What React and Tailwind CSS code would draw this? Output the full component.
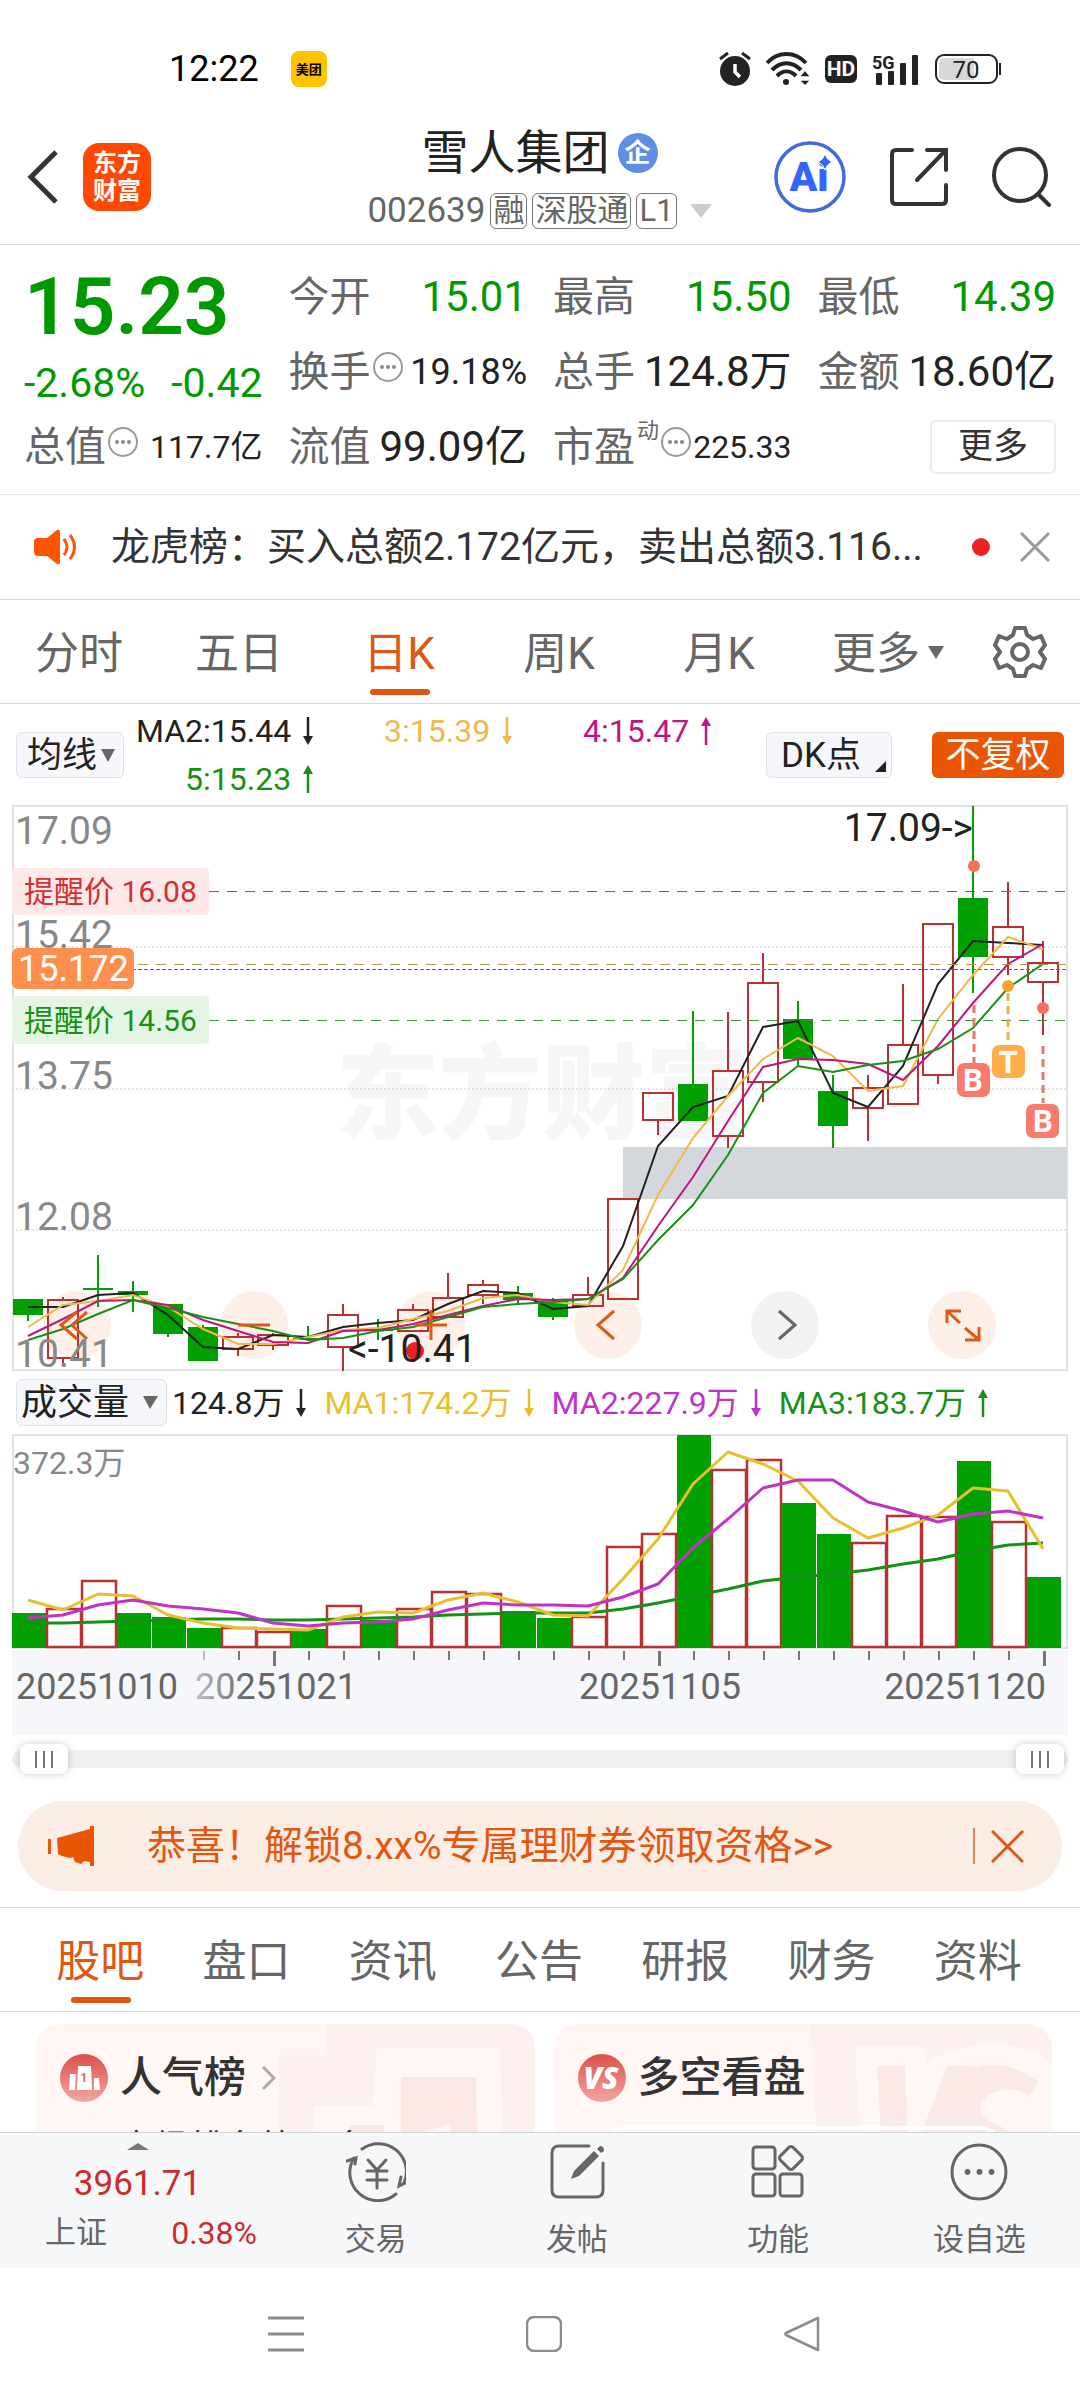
import { useState } from "react";
import clsx from "clsx";

const STEP = 35;
const cx = (i) => 16 + i * STEP;

// [type, wickTop, bodyTop, bodyBottom, wickBottom]
const candles = [
  ["down", 494, 494, 510, 516],
  ["up", 492, 495, 553, 560],
  ["down", 450, 483, 485, 502],
  ["down", 476, 486, 490, 507],
  ["down", 499, 499, 529, 532],
  ["down", 520, 522, 556, 556],
  ["up", 528, 532, 544, 551],
  ["up", 528, 530, 540, 545],
  ["down", 521, 533, 535, 536],
  ["up", 499, 510, 542, 566],
  ["down", 514, 524, 526, 535],
  ["up", 499, 505, 526, 526],
  ["up", 468, 493, 512, 512],
  ["up", 475, 480, 490, 499],
  ["down", 481, 488, 495, 500],
  ["down", 493, 496, 512, 515],
  ["up", 472, 490, 501, 501],
  ["up", 394, 394, 494, 494],
  ["up", 288, 288, 315, 330],
  ["down", 206, 279, 316, 316],
  ["up", 207, 266, 331, 343],
  ["up", 148, 178, 277, 297],
  ["down", 196, 214, 254, 260],
  ["down", 270, 286, 321, 343],
  ["up", 270, 283, 303, 336],
  ["up", 179, 240, 299, 299],
  ["up", 119, 119, 270, 279],
  ["down", 1, 93, 152, 188],
  ["up", 77, 122, 152, 170],
  ["up", 136, 158, 177, 230],
];

const priceLines = [
  { color: "#222222", ys: [502, 502, 490, 488, 510, 542, 544, 530, 532, 522, 518, 515, 499, 486, 488, 504, 501, 441, 341, 302, 291, 222, 216, 288, 302, 261, 179, 136, 138, 140] },
  { color: "#f2b84b", ys: [522, 500, 496, 490, 502, 524, 539, 539, 532, 525, 523, 514, 506, 493, 490, 497, 500, 465, 390, 333, 291, 254, 233, 251, 286, 281, 214, 170, 132, 144] },
  { color: "#c0157f", ys: [531, 514, 496, 495, 500, 515, 526, 537, 538, 526, 525, 519, 510, 501, 494, 495, 494, 473, 421, 372, 316, 262, 254, 255, 259, 275, 241, 198, 159, 139] },
  { color: "#159215", ys: [535, 524, 509, 495, 503, 512, 519, 526, 535, 533, 526, 522, 512, 502, 499, 497, 494, 474, 435, 400, 350, 288, 261, 267, 260, 256, 244, 223, 183, 159] },
];

const volumeTops = [179, 174, 146, 179, 183, 194, 193, 197, 195, 171, 186, 174, 157, 159, 177, 184, 182, 112, 99, 1, 35, 25, 69, 100, 108, 81, 82, 27, 87, 143];
const volumeDown = [0, 3, 4, 5, 8, 10, 14, 15, 19, 22, 23, 27, 29];

const volumeLines = [
  { color: "#159215", ys: [189, 189, 188, 187, 186, 185, 185, 186, 186, 185, 184, 183, 181, 180, 179, 179, 179, 175, 169, 162, 155, 147, 143, 140, 136, 130, 125, 117, 111, 109] },
  { color: "#e8bf2c", ys: [166, 176, 160, 162, 181, 189, 194, 195, 196, 183, 178, 179, 166, 159, 168, 181, 182, 145, 105, 50, 18, 30, 47, 84, 104, 94, 81, 54, 57, 115] },
  { color: "#bf33c6", ys: [184, 181, 171, 166, 172, 175, 179, 189, 192, 189, 188, 185, 176, 169, 171, 171, 172, 163, 150, 114, 85, 54, 46, 46, 68, 77, 88, 80, 77, 84] },
];

const toPoints = (ys) => ys.map((y, i) => `${cx(i)},${y}`).join(" ");

const periods = ["分时", "五日", "日K", "周K", "月K"];
const sections = ["股吧", "盘口", "资讯", "公告", "研报", "财务", "资料"];

export default function App() {
  return (
    <div className="flex h-screen min-h-[2380px] flex-col bg-white font-['Roboto','Noto_Sans_CJK_SC',sans-serif] text-[#333]">
      <StatusBar />
      <Header />
      <Quote />
      <Notice />
      <PeriodTabs />
      <AverageBar />
      <main className="px-3">
        <PriceChart />
        <VolumeHeader />
        <VolumeChart />
        <RangeSlider />
      </main>
      <Promo />
      <SectionTabs />
      <Cards />
      <BottomBar />
      <SystemNav />
    </div>
  );
}

function StatusBar() {
  return (
    <div className="flex items-center justify-between pt-12 pr-[78px] pl-[169px] text-black">
      <div className="flex items-center gap-8">
        <span className="text-4xl leading-[42px]">12:22</span>
        <span className="flex size-9 items-center justify-center rounded-lg bg-[#ffc300] text-[13px] leading-none font-bold">美团</span>
      </div>
      <div className="flex items-center gap-[15px] text-[#222]">
        <svg width="32" height="34" viewBox="0 0 32 34">
          <circle cx="16" cy="19" r="15" fill="#222" />
          <path d="M16 12v8l5 5" stroke="#fff" strokeWidth="3.5" fill="none" />
          <path d="M1 7l8-6M31 7l-8-6" stroke="#222" strokeWidth="3" />
        </svg>
        <svg width="44" height="34" viewBox="0 0 44 34" fill="none" stroke="#222" strokeWidth="4">
          <path d="M1 11c11-12 28-12 39 0" />
          <path d="M6 18c9-9 20-9 29 0" />
          <path d="M11 24c6-6 13-6 19 0" />
          <circle cx="20" cy="30" r="3" fill="#222" stroke="none" />
          <path d="M39 18l6 7H33zM39 34l-6-6h12z" fill="#222" stroke="#fff" strokeWidth="1.5" />
        </svg>
        <span className="flex h-7 w-8 items-center justify-center rounded-md bg-[#222] text-[21px] leading-none font-bold text-white">HD</span>
        <svg width="48" height="34" viewBox="0 0 48 34" fill="#222">
          <text x="0" y="17" fontSize="18" fontWeight="700">5G</text>
          <rect x="4" y="21" width="6" height="12" rx="1" />
          <rect x="16" y="19" width="6" height="14" rx="1" />
          <rect x="28" y="11" width="6" height="22" rx="1" />
          <rect x="40" y="3" width="6" height="30" rx="1" />
        </svg>
        <svg width="67" height="30" viewBox="0 0 67 30">
          <rect x="1" y="1" width="61" height="28" rx="8" fill="#fff" stroke="#222" strokeWidth="2" />
          <path d="M10 4h29v22H10q-6 0-6-6V10q0-6 6-6z" fill="#d8d8d8" />
          <rect x="64" y="9" width="2" height="12" fill="#222" />
          <text x="31" y="24" fontSize="24" textAnchor="middle" fill="#222">70</text>
        </svg>
      </div>
    </div>
  );
}

function Header() {
  return (
    <header className="grid grid-cols-[1fr_auto_1fr] items-center border-b border-[#d9d9d9] pt-[34px] pr-7 pb-[15px] pl-[27px]">
      <div className="flex items-center gap-6">
        <button aria-label="返回">
          <svg width="32" height="54" viewBox="0 0 32 54" fill="none" stroke="#333" strokeWidth="5">
            <path d="M29 2L4 27l25 25" />
          </svg>
        </button>
        <a href="#home" className="flex size-[68px] flex-col items-center justify-center rounded-2xl bg-[#ff4800] text-2xl leading-7 font-bold text-white">
          <span>东方</span>
          <span>财富</span>
        </a>
      </div>
      <div className="flex flex-col items-center gap-[11px]">
        <div className="flex items-center gap-2">
          <h1 className="text-[47px] leading-[58px] text-[#222]">雪人集团</h1>
          <span className="flex size-10 items-center justify-center rounded-full bg-[#5f8ee6] text-[26px] leading-none font-bold text-white">企</span>
        </div>
        <div className="flex items-center gap-[5px] text-[35px] leading-[36px] text-[#666]">
          <span>002639</span>
          <Pill>融</Pill>
          <Pill>深股通</Pill>
          <Pill>L1</Pill>
          <svg className="ml-2" width="22" height="14" viewBox="0 0 22 14" fill="#ccc">
            <path d="M0 0h22L11 14z" />
          </svg>
        </div>
      </div>
      <div className="flex items-center justify-end gap-11">
        <button aria-label="Ai">
          <svg width="72" height="72" viewBox="0 0 72 72">
            <circle cx="36" cy="36" r="34" fill="none" stroke="#4169e1" strokeWidth="3.5" />
            <text x="35" y="50" fontSize="41" fontWeight="900" textAnchor="middle" fill="#3366ff">Ai</text>
            <path d="M51 13q2 6 7 8q-5 2-7 8q-2-6-7-8q5-2 7-8z" fill="#3366ff" stroke="#fff" strokeWidth="1" />
          </svg>
        </button>
        <button aria-label="分享">
          <svg width="58" height="58" viewBox="0 0 58 58" fill="none" stroke="#333" strokeWidth="4" strokeLinecap="round">
            <path d="M22 2H6Q2 2 2 6v46q0 4 4 4h46q4 0 4-4V37" />
            <path d="M37 2h19v20M55 3L27 32" />
          </svg>
        </button>
        <button aria-label="搜索">
          <svg width="60" height="60" viewBox="0 0 60 60" fill="none" stroke="#333" strokeWidth="4" strokeLinecap="round">
            <circle cx="28" cy="28" r="26" />
            <path d="M46 47l11 11" />
          </svg>
        </button>
      </div>
    </header>
  );
}

function Pill({ children }) {
  return <span className="rounded-md border border-[#777] px-[2px] text-[31px] leading-[34px]">{children}</span>;
}

function Quote() {
  return (
    <section className="grid grid-cols-4 grid-rows-[repeat(3,75px)] items-center gap-x-[26px] border-b border-[#e8e8e8] px-6 pt-[14px] pb-[10px]">
      <div className="row-span-2 text-[#009900]">
        <div className="text-[80px] leading-[98px] font-semibold">15.23</div>
        <div className="flex justify-between text-[41px] leading-[54px]">
          <span>-2.68%</span>
          <span>-0.42</span>
        </div>
      </div>
      <Stat label="今开" value="15.01" green />
      <Stat label="最高" value="15.50" green />
      <Stat label="最低" value="14.39" green />
      <Stat label="换手" value="19.18%" size="text-[36px]" info />
      <Stat label="总手" value="124.8万" />
      <Stat label="金额" value="18.60亿" />
      <Stat label="总值" value="117.7亿" size="text-[32px]" info />
      <Stat label="流值" value="99.09亿" />
      <Stat label="市盈" sup="动" value="225.33" size="text-[32px]" info />
      <button className="justify-self-end rounded-md border-2 border-[#ebebeb] px-[26px] text-[35px] leading-[50px]">更多</button>
    </section>
  );
}

function Stat({ label, value, sup, size = "text-[42px]", info, green }) {
  return (
    <div className="flex items-center justify-between whitespace-nowrap">
      <span className="flex items-center text-[41px] leading-[54px] text-[#666]">
        {label}
        {sup && <sup className="-top-4 ml-[2px] text-[22px] leading-none">{sup}</sup>}
        {info && (
          <svg className="mb-2 ml-[2px]" width="31" height="31" viewBox="0 0 31 31">
            <circle cx="15" cy="15" r="14" fill="none" stroke="#999" strokeWidth="2" />
            <circle cx="9" cy="15" r="2" fill="#888" />
            <circle cx="15" cy="15" r="2" fill="#888" />
            <circle cx="21" cy="15" r="2" fill="#888" />
          </svg>
        )}
      </span>
      <span className={clsx(size, green ? "text-[#009900]" : "text-[#222]")}>{value}</span>
    </div>
  );
}

function Notice() {
  return (
    <div className="flex items-center border-b border-[#d9d9d9] pr-[30px] pl-[34px] leading-[104px]">
      <svg width="44" height="36" viewBox="0 0 44 36" fill="#ff5500">
        <path d="M4 9h9L23 1q3-1 3 2v30q0 3-3 2L13 27H4q-4 0-4-4V13q0-4 4-4z" />
        <path d="M30 10q6 8 0 16M36 6q9 12 0 24" fill="none" stroke="#ff5500" strokeWidth="3" />
      </svg>
      <p className="ml-[33px] flex-1 truncate text-[39px]">龙虎榜：买入总额2.172亿元，卖出总额3.116...</p>
      <span className="size-[18px] rounded-full bg-[#f02020]" />
      <button className="ml-[30px]" aria-label="关闭">
        <svg width="30" height="30" viewBox="0 0 30 30" stroke="#999" strokeWidth="3">
          <path d="M1 1l28 28M29 1L1 29" />
        </svg>
      </button>
    </div>
  );
}

function PeriodTabs() {
  const [active, setActive] = useState("日K");
  return (
    <nav className="grid grid-cols-[repeat(6,1fr)_120px] items-center border-b border-[#d9d9d9] text-[44px] leading-[97px] text-[#666]">
      {periods.map((p) => (
        <button key={p} onClick={() => setActive(p)} className={clsx("relative pt-[6px] pr-[2px]", p === active && "text-[#e2570f]")}>
          {p}
          {p === active && <span className="absolute inset-x-0 bottom-2 mx-auto h-[6px] w-[60px] rounded-full bg-[#e2570f]" />}
        </button>
      ))}
      <button className="flex items-center justify-center gap-2 pt-[6px] pl-4">
        更多
        <svg className="mb-1" width="16" height="13" viewBox="0 0 16 13" fill="#666">
          <path d="M0 0h16L8 13z" />
        </svg>
      </button>
      <button className="flex justify-center" aria-label="设置">
        <svg width="54" height="54" viewBox="0 0 54 54" fill="none" stroke="#666" strokeWidth="4" strokeLinejoin="round">
          <path d="M22 3h10l2 7 6 4 8-3 4 9-5 7 5 7-4 9-8-3-6 4-2 7H22l-2-7-6-4-8 3-4-9 5-7-5-7 4-9 8 3 6-4z" />
          <circle cx="27" cy="27" r="8" />
        </svg>
      </button>
    </nav>
  );
}

function Arrow({ up }) {
  return (
    <svg width="10" height="28" viewBox="0 0 10 28" className={clsx("shrink-0", up && "rotate-180")}>
      <path d="M5 0v20" stroke="currentColor" strokeWidth="2.5" />
      <path d="M0 19h10L5 28z" fill="currentColor" />
    </svg>
  );
}

function AverageBar() {
  return (
    <div className="flex items-center px-4 pt-[3px] pb-[2px]">
      <button className="flex h-[46px] items-center gap-1 rounded-md border border-[#dfe2e8] bg-[#f6f7fa] pr-2 pl-[10px] text-[35px] leading-none text-[#222]">
        均线
        <svg width="14" height="13" viewBox="0 0 14 13" fill="#666">
          <path d="M0 0h14L7 13z" />
        </svg>
      </button>
      <div className="ml-3 grid grid-cols-[auto_199px_199px] text-[32px] leading-[48px]">
        <Average text="MA2:15.44" className="text-[#222]" />
        <Average text="3:15.39" className="text-[#f2b84b]" />
        <Average text="4:15.47" className="text-[#c0157f]" up />
        <Average text="5:15.23" className="text-[#159215]" up />
      </div>
      <button className="relative ml-auto h-[46px] w-[126px] rounded-md border border-[#dfe2e8] bg-[#f6f7fa] pr-4 text-[35px] leading-none text-[#222]">
        DK点
        <svg className="absolute right-[5px] bottom-[5px]" width="11" height="11" viewBox="0 0 11 11" fill="#222">
          <path d="M11 0v11H0z" />
        </svg>
      </button>
      <button className="ml-10 h-[46px] w-[132px] rounded-md bg-[#ea5504] text-[35px] leading-none text-white">不复权</button>
    </div>
  );
}

function Average({ text, className, up }) {
  return (
    <span className={clsx("flex items-center justify-end gap-3", className)}>
      {text}
      <Arrow up={up} />
    </span>
  );
}

function PriceChart() {
  return (
    <div className="relative">
      <svg className="block h-auto w-full" viewBox="0 0 1056 566">
        <text x="324" y="326" fontSize="103" fontWeight="900" fill="#f6f6f6">东方财富</text>
        <rect x="1" y="1" width="1054" height="564" fill="none" stroke="#e2e2e2" strokeWidth="2" />
        {[142, 284, 425].map((y) => (
          <line key={y} x1="0" x2="1055" y1={y} y2={y} stroke="#ccc" strokeDasharray="2 2" />
        ))}
        <g fontSize="39" fill="#888">
          <text x="3" y="39">17.09</text>
          <text x="3" y="143">15.42</text>
          <text x="3" y="284">13.75</text>
          <text x="3" y="425">12.08</text>
        </g>

        {/* gap zone */}
        <rect x="611" y="342" width="444" height="52" fill="#d4d8dd" />

        {/* navigation discs, under the candles */}
        {[65, 242, 419, 596, 773, 950].map((x) => (
          <circle key={x} cx={x} cy="520" r="34" fill={x === 773 ? "#f2f2f2" : "#fef0e9"} />
        ))}

        {candles.map(([type, top, bodyTop, bodyBottom, bottom], i) =>
          type === "down" ? (
            <g key={i} fill="#00a000">
              <rect x={cx(i) - 15} y={bodyTop} width="30" height={bodyBottom - bodyTop} />
              <rect x={cx(i) - 1} y={top} width="2" height={bottom - top} />
            </g>
          ) : (
            <g key={i} fill="none" stroke="#b83232" strokeWidth="2">
              <rect x={cx(i) - 15} y={bodyTop} width="30" height={bodyBottom - bodyTop} />
              <path d={`M${cx(i)} ${top}V${bodyTop}M${cx(i)} ${bodyBottom}V${bottom}`} />
            </g>
          )
        )}
        {priceLines.map((l) => (
          <polyline key={l.color} points={toPoints(l.ys)} fill="none" stroke={l.color} strokeWidth="2" />
        ))}

        {/* price levels */}
        <g shapeRendering="crispEdges">
          <path d="M197 86H1055" stroke="#c04545" strokeDasharray="10 8" />
          <path d="M0 159H1055" stroke="#b8904f" strokeDasharray="10 8" />
          <path d="M0 164H1055" stroke="#8a6a2a" strokeDasharray="4 2" />
          <path d="M197 215H1055" stroke="#3c943c" strokeDasharray="10 8" />
        </g>
        <rect x="0" y="63" width="197" height="47" rx="4" fill="#ffe8e8" />
        <text x="12" y="97" fontSize="30" fill="#d03030">提醒价 16.08</text>
        <rect x="0" y="143" width="122" height="41" rx="6" fill="#ff8f4d" />
        <text x="6" y="176" fontSize="36" fill="#fff">15.172</text>
        <rect x="0" y="191" width="197" height="48" rx="4" fill="#e4f5e4" />
        <text x="12" y="226" fontSize="30" fill="#159215">提醒价 14.56</text>

        {/* trade marks */}
        <g strokeWidth="3" strokeDasharray="8 5">
          <path d="M962 200V258" stroke="#e57a6c" />
          <path d="M996 188V238" stroke="#eeb04e" />
          <path d="M1031 241V298" stroke="#e57a6c" />
        </g>
        <circle cx="962" cy="61" r="6" fill="#f9705a" />
        <circle cx="996" cy="181" r="6" fill="#f5a332" />
        <circle cx="1031" cy="203" r="6" fill="#f9705a" />
        <g fontSize="31" fontWeight="700" textAnchor="middle" fill="#fff">
          <rect x="945" y="258" width="33" height="34" rx="7" fill="#f97b6c" />
          <text x="961" y="286">B</text>
          <rect x="980" y="240" width="33" height="33" rx="7" fill="#ffae4a" />
          <text x="996" y="268">T</text>
          <rect x="1014" y="299" width="33" height="34" rx="7" fill="#f97b6c" />
          <text x="1031" y="327">B</text>
        </g>

        <circle cx="403" cy="546" r="9" fill="#f02020" />
        <text x="3" y="562" fontSize="39" fill="#888">10.41</text>
        <text x="336" y="557" fontSize="39" fill="#222">&lt;-10.41</text>
        <text x="961" y="36" fontSize="39" textAnchor="end" fill="#222">17.09-&gt;</text>
      </svg>
      <div className="absolute right-[72px] bottom-3 left-[31px] flex justify-between text-[#dd5a14]">
        <NavButton label="最早">
          <path d="M34 21L18 34l16 14M44 21L29 34l15 14" />
        </NavButton>
        <NavButton label="缩小">
          <path d="M18 34h32" />
        </NavButton>
        <NavButton label="放大">
          <path d="M18 34h32M34 19v30" />
        </NavButton>
        <NavButton label="向左">
          <path d="M40 20L24 34l16 14" />
        </NavButton>
        <NavButton label="向右" className="text-[#666]">
          <path d="M28 20l16 14-16 14" />
        </NavButton>
        <NavButton label="全屏">
          <path d="M19 32V20h14M19 20l13 12M51 36v13H37M51 49L37 37" />
        </NavButton>
      </div>
    </div>
  );
}

function NavButton({ label, className, children }) {
  return (
    <button aria-label={label} className={className}>
      <svg width="68" height="68" viewBox="0 0 68 68" fill="none" stroke="currentColor" strokeWidth="3">
        {children}
      </svg>
    </button>
  );
}

function VolumeHeader() {
  return (
    <div className="flex h-[63px] items-center text-[32px] whitespace-nowrap">
      <button className="mr-[5px] ml-1 flex h-[47px] w-[151px] items-center justify-between rounded-md border border-[#dfe2e8] bg-[#f6f7fa] pr-2 pl-1 text-[36px] leading-none text-[#222]">
        成交量
        <svg width="15" height="13" viewBox="0 0 15 13" fill="#666">
          <path d="M0 0h15L7 13z" />
        </svg>
      </button>
      <div className="flex gap-[18px]">
        <Average text="124.8万" className="text-[#222]" />
        <Average text="MA1:174.2万" className="text-[#e8bf2c]" />
        <Average text="MA2:227.9万" className="text-[#bf33c6]" />
        <Average text="MA3:183.7万" className="text-[#159215]" up />
      </div>
    </div>
  );
}

function VolumeChart() {
  return (
    <svg className="block h-auto w-full" viewBox="0 0 1056 301">
      <defs>
        <linearGradient id="fade" gradientUnits="userSpaceOnUse" x1="180" x2="235" y1="0" y2="0">
          <stop offset="0" stopColor="#c4c4c4" />
          <stop offset="1" stopColor="#666" />
        </linearGradient>
      </defs>
      <rect x="1" y="1" width="1054" height="213" fill="none" stroke="#e2e2e2" strokeWidth="2" />
      <rect x="0" y="216" width="1056" height="85" fill="#f6f7fa" />
      {volumeTops.map((top, i) =>
        volumeDown.includes(i) ? (
          <rect key={i} x={i * STEP} y={top} width="34" height={214 - top} fill="#00a000" />
        ) : (
          <rect key={i} x={i * STEP} y={top + 1} width="34" height={212 - top} fill="#fff" stroke="#b83232" strokeWidth="2.5" />
        )
      )}
      {volumeLines.map((l) => (
        <polyline key={l.color} points={toPoints(l.ys)} fill="none" stroke={l.color} strokeWidth="3" strokeLinejoin="round" />
      ))}
      {candles.map((_, i) => {
        if (i < 5) return null;
        const major = i === 7 || i === 18 || i === 29;
        return <rect key={i} x={cx(i)} y="217" width={major ? 3 : 2} height={major ? 15 : 9} fill={i === 5 ? "#bbb" : "#777"} />;
      })}
      <text x="1" y="40" fontSize="32" fill="#888">372.3万</text>
      <g fontSize="36" fill="#666">
        <text x="4" y="265">20251010</text>
        <text x="183" y="265" fill="url(#fade)">20251021</text>
        <text x="567" y="265">20251105</text>
        <text x="1034" y="265" textAnchor="end">20251120</text>
      </g>
    </svg>
  );
}

const thumb =
  "pointer-events-none absolute inset-y-0 right-0 left-1 h-full appearance-none bg-transparent px-1 [&::-webkit-slider-thumb]:pointer-events-auto [&::-webkit-slider-thumb]:h-[30px] [&::-webkit-slider-thumb]:w-12 [&::-webkit-slider-thumb]:appearance-none [&::-webkit-slider-thumb]:rounded-lg [&::-webkit-slider-thumb]:bg-white [&::-webkit-slider-thumb]:bg-[image:repeating-linear-gradient(90deg,#777_0_2px,transparent_2px_8px)] [&::-webkit-slider-thumb]:bg-[length:18px_17px] [&::-webkit-slider-thumb]:bg-center [&::-webkit-slider-thumb]:bg-no-repeat [&::-webkit-slider-thumb]:shadow-[0_0_8px_rgba(0,0,0,0.2)]";

function RangeSlider() {
  const [from, setFrom] = useState(0);
  const [to, setTo] = useState(100);
  return (
    <div className="relative mt-[9px] flex h-[30px] items-center">
      <div className="h-[18px] w-full rounded-full bg-[#f0f0f3]" />
      <input type="range" aria-label="起始日期" value={from} onChange={(e) => setFrom(Number(e.target.value))} className={clsx(thumb, "w-[calc(100%-4px)]")} />
      <input type="range" aria-label="结束日期" value={to} onChange={(e) => setTo(Number(e.target.value))} className={clsx(thumb, "w-[calc(100%-4px)]")} />
    </div>
  );
}

function Promo() {
  return (
    <div className="mx-[18px] mt-[27px] flex items-center rounded-full bg-[#fcede4] pr-[38px] pl-[30px] leading-[90px] text-[#e2570f]">
      <svg width="46" height="40" viewBox="0 0 46 40" fill="#ea5504">
        <path d="M0 13h3v15H0zM9 12L42 3V0h4v40h-4v-4l-6-1-3 3-6-2-2-5-3 1-8-2-4-2z" />
      </svg>
      <a href="#coupon" className="ml-[53px] flex-1 text-[39px]">恭喜！解锁8.xx%专属理财券领取资格&gt;&gt;</a>
      <span className="mr-4 h-9 w-[2px] bg-[#d98a5e]" />
      <button aria-label="关闭">
        <svg width="33" height="33" viewBox="0 0 33 33" stroke="#e2570f" strokeWidth="3">
          <path d="M1 1l31 31M32 1L1 32" />
        </svg>
      </button>
    </div>
  );
}

function SectionTabs() {
  const [active, setActive] = useState("股吧");
  return (
    <nav className="mt-4 grid grid-cols-7 border-y border-[#d9d9d9] px-7 text-[44px] leading-[97px] text-[#666]">
      {sections.map((s) => (
        <button key={s} onClick={() => setActive(s)} className={clsx("relative pt-[6px] pr-[2px]", s === active && "text-[#e2570f]")}>
          {s}
          {s === active && <span className="absolute inset-x-0 bottom-2 mx-auto h-[6px] w-[60px] rounded-full bg-[#e2570f]" />}
        </button>
      ))}
    </nav>
  );
}

function Cards() {
  return (
    <section className="grid min-h-0 flex-1 grid-cols-2 gap-[19px] overflow-hidden pt-3 pr-7 pl-9 text-[42px] leading-[50px] font-medium">
      <div className="relative h-[240px] overflow-hidden rounded-3xl bg-gradient-to-b from-[#fff6f4] to-[#fffaf7]">
        <svg className="absolute top-0 right-0" width="256" height="240" viewBox="0 0 256 240">
          <path d="M48 0h208v240H0V31h45z" fill="#fdf1ef" />
          <path d="M98 24h123l6 216H34V82h60z" fill="#fff8f5" />
          <path d="M122 53h75l4 187h-80zM70 101h35v139H70z" fill="#fbe8e6" />
          <path d="M138 110l34-10v140h-20V108z" fill="#fff5f2" />
        </svg>
        <a href="#rank" className="relative flex items-center px-6 pt-[29px]">
          <svg width="48" height="48" viewBox="0 0 48 48">
            <RedDisc />
            <path d="M10 20h6l-1 16H9zM18 12h13l1 24H17zM34 24h5l1 12h-6z" fill="#fff" />
            <text x="24" y="28" fontSize="12" fontWeight="700" textAnchor="middle" fill="#e0605a">1</text>
          </svg>
          <span className="ml-3">人气榜</span>
          <svg className="ml-4" width="14" height="24" viewBox="0 0 14 24" fill="none" stroke="#aaa" strokeWidth="3">
            <path d="M1 1l11 11L1 23" />
          </svg>
        </a>
        <p className="relative pt-[21px] pl-[84px] text-[35px] font-normal">市场排名第12名</p>
      </div>
      <div className="relative h-[240px] overflow-hidden rounded-3xl bg-gradient-to-b from-[#fff6f4] to-[#fffaf7]">
        <svg className="absolute top-0 right-0" width="242" height="240" viewBox="0 0 242 240">
          <path d="M0 0h242v240H14z" fill="#fdf1ef" />
          <path d="M45 22h68l3 18q30-20 70-20 40 2 56 20v200H58z" fill="#fff7f4" />
          <path d="M67 42h28l4 100 38-100h28L120 170H74z" fill="#fbe9e7" />
          <path d="M229 58q-30-22-58-16-36 8-42 40 0 30 30 44l20 14h40q-4-28-34-40-18-8-14-20 8-16 34-14 10 2 14 6z" fill="#fbe9e7" />
        </svg>
        <a href="#vote" className="relative flex items-center px-6 pt-[29px]">
          <svg width="48" height="48" viewBox="0 0 48 48">
            <RedDisc />
            <text x="23" y="35" fontSize="30" fontWeight="800" fontStyle="italic" textAnchor="middle" fill="#fff" className="font-['Open_Sans']">VS</text>
          </svg>
          <span className="ml-3">多空看盘</span>
        </a>
        <div className="relative mx-12 mt-[23px] h-32 rounded-3xl border-4 border-white" />
      </div>
    </section>
  );
}

function RedDisc() {
  return (
    <>
      <defs>
        <linearGradient id="disc" x1="0" x2="0" y1="0" y2="1">
          <stop offset="0" stopColor="#dc4f4a" />
          <stop offset="1" stopColor="#f4a5a0" />
        </linearGradient>
      </defs>
      <circle cx="24" cy="24" r="24" fill="url(#disc)" />
    </>
  );
}

function BottomBar() {
  return (
    <nav className="grid grid-cols-[275px_repeat(4,1fr)] border-t border-[#d0d3d8] bg-[#f6f7f9] text-[31px] leading-[44px] text-[#666]">
      <a href="#index" className="flex flex-col items-center pt-[10px] text-[#cc2b2b]">
        <svg width="22" height="7" viewBox="0 0 22 7" fill="#777">
          <path d="M11 0l11 7H0z" />
        </svg>
        <span className="mt-[10px] text-[35px] leading-[48px]">3961.71</span>
        <span className="mt-[2px] flex w-full justify-between pr-[18px] pl-[45px] leading-[46px]">
          <span className="text-[#666]">上证</span>
          <span className="text-[32px]">0.38%</span>
        </span>
      </a>
      <BarItem label="交易">
        <path d="M16 7a28 28 0 0 1 42 34M8 16a28 28 0 0 0 42 36" />
        <path d="M1 19l9-3-1 6M55 35l-2 9 8-4" />
        <path d="M22 18l9 10 9-10M31 28v18M21 29h20M21 38h20" />
      </BarItem>
      <BarItem label="发帖">
        <path d="M42 4H12q-7 0-7 7v37q0 7 7 7h37q7 0 7-7V21" />
        <path d="M24 37l3-8L47 9l5 5-20 20zM50 7l3-3q4 0 4 5l-3 2z" fill="#666" stroke="none" />
      </BarItem>
      <BarItem label="功能">
        <rect x="5" y="5" width="22" height="22" rx="3" />
        <rect x="5" y="32" width="22" height="22" rx="3" />
        <rect x="32" y="32" width="22" height="22" rx="3" />
        <rect x="34" y="7" width="18" height="18" rx="3" transform="rotate(45 43 16)" />
      </BarItem>
      <BarItem label="设自选">
        <circle cx="30" cy="30" r="27" />
        <path d="M18 27a3 3 0 1 0 1 0zM30 27a3 3 0 1 0 1 0zM42 27a3 3 0 1 0 1 0z" fill="#666" stroke="none" />
      </BarItem>
    </nav>
  );
}

function BarItem({ label, children }) {
  return (
    <button className="flex flex-col items-center pt-[9px] pb-[6px]">
      <svg width="60" height="60" viewBox="0 0 60 60" fill="none" stroke="#666" strokeWidth="3" strokeLinecap="round">
        {children}
      </svg>
      <span className="mt-4">{label}</span>
    </button>
  );
}

function SystemNav() {
  return (
    <div className="flex h-[132px] shrink-0 items-center justify-center gap-[222px] pl-2">
      <button aria-label="菜单">
        <svg width="36" height="36" viewBox="0 0 36 36" stroke="#8c8c8c" strokeWidth="3">
          <path d="M0 2h36M0 18h36M0 34h36" />
        </svg>
      </button>
      <button aria-label="主页">
        <svg width="36" height="36" viewBox="0 0 36 36" fill="none" stroke="#8c8c8c" strokeWidth="2.5">
          <rect x="1" y="1" width="34" height="34" rx="7" />
        </svg>
      </button>
      <button aria-label="后退">
        <svg width="36" height="36" viewBox="0 0 36 36" fill="none" stroke="#8c8c8c" strokeWidth="2.5" strokeLinejoin="round">
          <path d="M34 2v32L2 19q-1-1 0-2z" />
        </svg>
      </button>
    </div>
  );
}
